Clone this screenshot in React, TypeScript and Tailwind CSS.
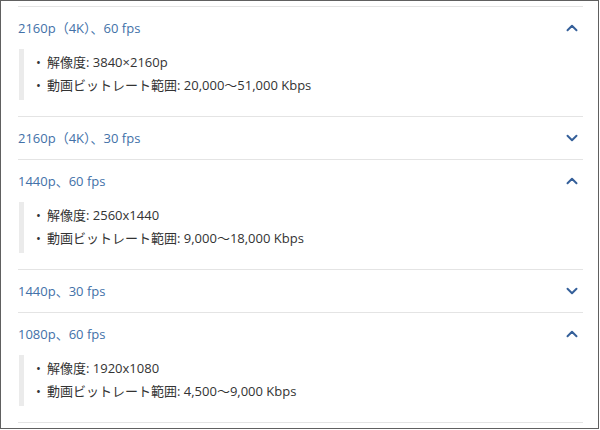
import React from "react";

type Item = { title: string; open: boolean; res?: string; rate?: string };

const items: Item[] = [
  { title: "2160p（4K）、60 fps", open: true, res: "3840×2160p", rate: "20,000～51,000 Kbps" },
  { title: "2160p（4K）、30 fps", open: false },
  { title: "1440p、60 fps", open: true, res: "2560x1440", rate: "9,000～18,000 Kbps" },
  { title: "1440p、30 fps", open: false },
  { title: "1080p、60 fps", open: true, res: "1920x1080", rate: "4,500～9,000 Kbps" },
];

function Chevron({ up }: { up: boolean }) {
  return (
    <svg width="18" height="18" viewBox="0 0 24 24" fill="none" stroke="#35609a" strokeWidth="2.6" strokeLinecap="round" strokeLinejoin="round">
      {up ? <path d="m18 15-6-6-6 6" /> : <path d="m6 9 6 6 6-6" />}
    </svg>
  );
}

export default function App() {
  return (
    <div className="w-[600px] h-[430px] bg-white">
      <div
        className="w-[599px] h-[429px] border border-[#606060] pt-[5px] pl-[17px]"
        style={{ fontFamily: "'Open Sans', 'Noto Sans CJK JP', sans-serif" }}
      >
        <div className="w-[565px]">
          {items.map((it, i) => (
            <div key={i} className="border-t border-[#e4e4e4]">
              <div className="h-[42px] flex items-center justify-between pr-[2px]">
                <span className="text-[13px] text-[#4271a8] leading-none pt-[1px]">{it.title}</span>
                <Chevron up={it.open} />
              </div>
              {it.open && (
                <div className="pb-[16px] pl-[1px]">
                  <div className="border-l-[5px] border-[#ebebeb] pt-[2px] pb-[3px] text-[13px] text-[#333] leading-[23px]">
                    <div className="flex">
                      <span className="w-[23px] text-right pr-[6px]">•</span>
                      <span>解像度: {it.res}</span>
                    </div>
                    <div className="flex">
                      <span className="w-[23px] text-right pr-[6px]">•</span>
                      <span>動画ビットレート範囲: {it.rate}</span>
                    </div>
                  </div>
                </div>
              )}
            </div>
          ))}
          <div className="border-t border-[#e4e4e4]" />
        </div>
      </div>
    </div>
  );
}
